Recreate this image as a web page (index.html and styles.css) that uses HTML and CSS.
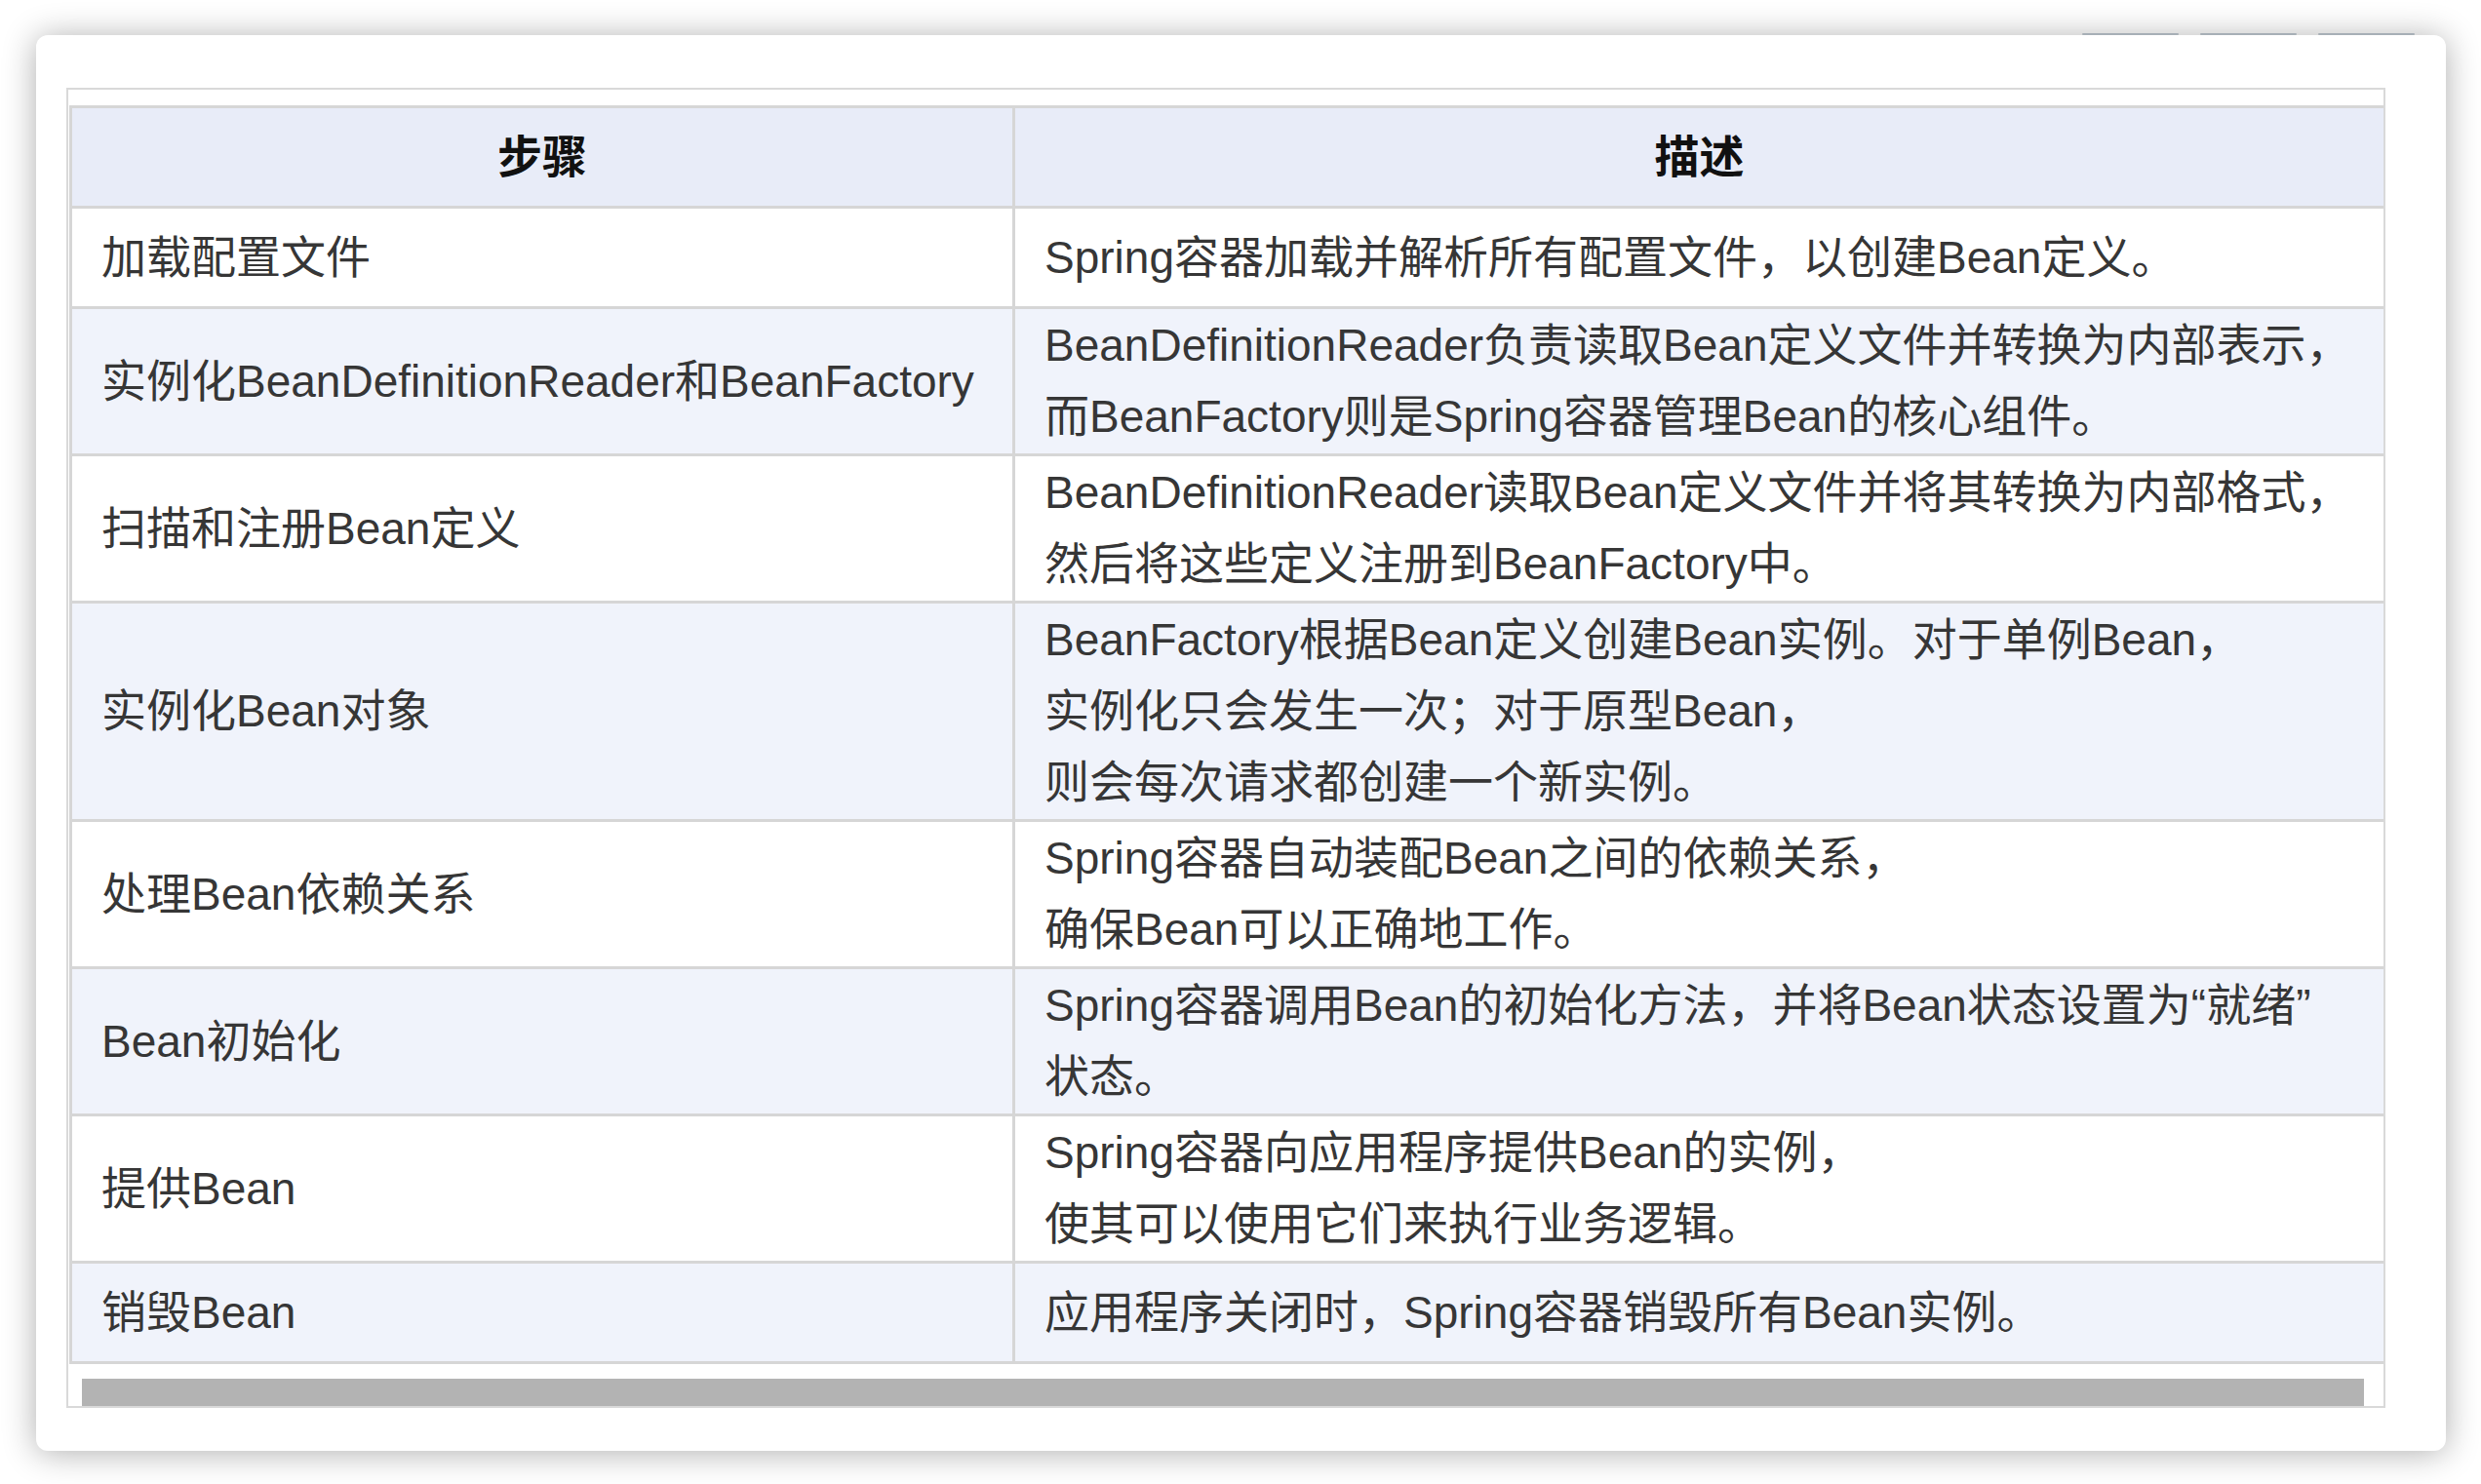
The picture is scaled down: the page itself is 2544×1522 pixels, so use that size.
FILE: index.html
```html
<!DOCTYPE html>
<html lang="zh-CN">
<head>
    <meta charset="UTF-8">
    <meta name="viewport" content="width=device-width, initial-scale=1.0">
    <title>Spring Bean 生命周期</title>
    <link rel="stylesheet" href="styles.css">
</head>
<body>
    <div class="card">
        <div class="tabs-behind">
            <span></span><span></span><span></span>
        </div>

        <div class="table-wrap">
            <table class="steps">
                <colgroup>
                    <col class="col-step">
                    <col class="col-desc">
                </colgroup>
                <thead>
                    <tr>
                        <th>步骤</th>
                        <th>描述</th>
                    </tr>
                </thead>
                <tbody>
                    <tr>
                        <td>加载配置文件</td>
                        <td>Spring容器加载并解析所有配置文件，以创建Bean定义。</td>
                    </tr>
                    <tr>
                        <td>实例化BeanDefinitionReader和BeanFactory</td>
                        <td>BeanDefinitionReader负责读取Bean定义文件并转换为内部表示，<br>而BeanFactory则是Spring容器管理Bean的核心组件。</td>
                    </tr>
                    <tr>
                        <td>扫描和注册Bean定义</td>
                        <td>BeanDefinitionReader读取Bean定义文件并将其转换为内部格式，<br>然后将这些定义注册到BeanFactory中。</td>
                    </tr>
                    <tr>
                        <td>实例化Bean对象</td>
                        <td>BeanFactory根据Bean定义创建Bean实例。对于单例Bean，<br>实例化只会发生一次；对于原型Bean，<br>则会每次请求都创建一个新实例。</td>
                    </tr>
                    <tr>
                        <td>处理Bean依赖关系</td>
                        <td>Spring容器自动装配Bean之间的依赖关系，<br>确保Bean可以正确地工作。</td>
                    </tr>
                    <tr>
                        <td>Bean初始化</td>
                        <td>Spring容器调用Bean的初始化方法，并将Bean状态设置为“就绪”<br>状态。</td>
                    </tr>
                    <tr>
                        <td>提供Bean</td>
                        <td>Spring容器向应用程序提供Bean的实例，<br>使其可以使用它们来执行业务逻辑。</td>
                    </tr>
                    <tr>
                        <td>销毁Bean</td>
                        <td>应用程序关闭时，Spring容器销毁所有Bean实例。</td>
                    </tr>
                </tbody>
            </table>
            <div class="scroll-thumb"></div>
        </div>
    </div>
</body>
</html>
```

FILE: styles.css
```css
html, body {
    height: 100%;
}
body {
    font-family: "Liberation Sans", "Noto Sans CJK SC", sans-serif;
    background-color: #fff;
    margin: 0;
    padding: 36px 0 0 37px;
    box-sizing: border-box;
    overflow: hidden;
}
.card {
    position: relative;
    box-sizing: border-box;
    width: 2471px;
    padding: 54px 62px 44px 31px;
    background-color: #fff;
    border-radius: 12px;
    box-shadow: 0 2px 34px rgba(0, 0, 0, 0.32);
}
/* thin edges of the toolbar buttons peeking above the card */
.tabs-behind {
    position: absolute;
    top: -2px;
    right: 32px;
    display: flex;
    gap: 22px;
}
.tabs-behind span {
    width: 99px;
    height: 2px;
    background-color: #a7afb6;
    border-radius: 1px;
}
.table-wrap {
    border: 2px solid #d9d9d9;
    padding-top: 16px;
}
.steps {
    table-layout: fixed;
    width: 2373px;
    margin-left: 1px;
    border-spacing: 0;
    border-top: 3px solid #d6d6d6;
    border-left: 3px solid #d6d6d6;
    font-size: 46px;
    line-height: 73px;
    color: #363636;
}
.col-step {
    width: 967px;
}
.col-desc {
    width: 1403px;
}
.steps tr {
    height: 103px;
}
.steps th,
.steps td {
    padding: 1px 30px;
    border-bottom: 3px solid #d6d6d6;
    white-space: nowrap;
    vertical-align: middle;
}
.steps th:first-child,
.steps td:first-child {
    border-right: 3px solid #d6d6d6;
}
.steps th {
    background-color: #e8ecf8;
    color: #111;
    font-weight: bold;
    text-align: center;
}
.steps td {
    text-align: left;
}
.steps tbody tr:nth-child(even) td {
    background-color: #f0f3fb;
}
.scroll-thumb {
    height: 28px;
    margin: 15px 20px 0 14px;
    background-color: #b3b3b3;
}
```
